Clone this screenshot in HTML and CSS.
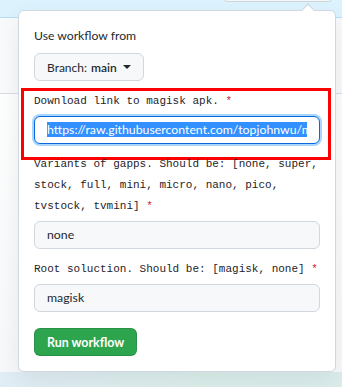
FILE: index.html
```html
<!DOCTYPE html>
<html>
<head>
<meta charset="utf-8">
<link rel="stylesheet" href="styles.css">
</head>
<body>
<div class="page">
  <div class="banner">
    <div class="banner-btn"></div>
  </div>
  <div class="row-head"></div>
  <div class="row-body"></div>
  <div class="footer"></div>

  <div class="popover">
    <div class="from-label">Use workflow from</div>
    <button class="branch-btn">Branch: <strong>main</strong> <span class="caret"></span></button>

    <div class="group group-first">
      <div class="label">Download link to magisk apk. <span class="req">*</span></div>
      <div class="input focused"><div class="clip"><span class="sel">https://raw.githubusercontent.com/topjohnwu/magisk-files/</span></div></div>
      <div class="annot"></div>
    </div>

    <div class="group">
      <div class="label">Variants of gapps. Should be: [none, super, stock, full, mini, micro, nano, pico, tvstock, tvmini] <span class="req">*</span></div>
      <div class="input">none</div>
    </div>

    <div class="group">
      <div class="label">Root soluction. Should be: [magisk, none] <span class="req">*</span></div>
      <div class="input">magisk</div>
    </div>

    <button class="run-btn">Run workflow</button>
  </div>
</div>
</body>
</html>
```

FILE: styles.css
```css
* { box-sizing: border-box; }
html, body { margin: 0; padding: 0; }
body {
  width: 342px;
  height: 387px;
  overflow: hidden;
  background: #ffffff;
  font-family: Lato, "Noto Sans", sans-serif;
  color: #24292f;
}
.page {
  position: relative;
  width: 342px;
  height: 387px;
  display: flex;
  flex-direction: column;
}
.banner {
  height: 18px;
  background: #ddf4ff;
  border-bottom: 1px solid #b6dcf5;
  display: flex;
  justify-content: flex-end;
  padding-right: 8px;
}
.banner-btn {
  width: 112px;
  height: 30px;
  margin-top: -28px;
  background: #f6f8fa;
  border: 1px solid #d0d7de;
  border-radius: 6px;
}
.row-head {
  height: 76px;
  background: #fafbfc;
  border-bottom: 1px solid #d8dee4;
}
.row-body {
  flex: 1;
  background: linear-gradient(180deg, #ffffff, #f8f9fa);
}
.footer {
  height: 15px;
  background: linear-gradient(90deg, #e2eef6, #dcefea 60%, #dbeeee);
}

.popover {
  position: absolute;
  left: 18px;
  top: 10px;
  width: 318px;
  height: 362px;
  background: #ffffff;
  border: 1px solid #d0d7de;
  border-radius: 6px;
  box-shadow: 0 8px 24px rgba(140, 149, 159, 0.2);
  padding: 15px;
  display: flex;
  flex-direction: column;
  align-items: flex-start;
}
.popover::before,
.popover::after {
  content: "";
  position: absolute;
  left: 282px;
  border: 7px solid transparent;
}
.popover::before {
  top: -15px;
  border-bottom: 8px solid #d0d7de;
}
.popover::after {
  top: -13px;
  border-bottom: 7px solid #ffffff;
}

.from-label {
  font-size: 12.2px;
  line-height: 20px;
}
.branch-btn {
  margin-top: 7px;
  height: 28px;
  padding: 0 12px;
  font-family: inherit;
  font-size: 12px;
  color: #24292f;
  background: #f6f8fa;
  border: 1px solid #d0d7de;
  border-radius: 6px;
  display: flex;
  align-items: center;
  gap: 4px;
}
.branch-btn strong { font-weight: 600; }
.caret {
  width: 0;
  height: 0;
  border-left: 4px solid transparent;
  border-right: 4px solid transparent;
  border-top: 4px solid #24292f;
  margin-left: 2px;
}

.group {
  position: relative;
  width: 100%;
  margin-top: 10px;
}
.label {
  font-family: "Liberation Mono", "DejaVu Sans Mono", monospace;
  font-size: 11px;
  line-height: 21px;
  color: #1f2328;
  margin-bottom: 4px;
}
.req { color: #cf222e; }
.input {
  height: 28px;
  padding: 0 12px;
  font-size: 12.3px;
  line-height: 26px;
  color: #24292f;
  background: #f6f8fa;
  border: 1px solid #d0d7de;
  border-radius: 6px;
  white-space: nowrap;
  overflow: hidden;
}
.input.focused {
  background: #ffffff;
  border-color: #0969da;
  box-shadow: 0 0 0 2px rgba(84, 174, 255, 0.5);
  line-height: 17px;
  padding: 4px 12px 0 12px;
}
.clip {
  overflow: hidden;
  white-space: nowrap;
}
.sel {
  background: #3390ff;
  color: #ffffff;
}
.annot {
  position: absolute;
  left: -13px;
  top: -3px;
  right: -11px;
  bottom: -16px;
  border: 3px solid #ff0000;
  pointer-events: none;
}

.run-btn {
  margin-top: 16px;
  height: 28px;
  padding: 0 12px;
  font-family: inherit;
  font-size: 12.4px;
  font-weight: 700;
  color: #ffffff;
  background: #2da44e;
  border: 1px solid rgba(27, 31, 36, 0.15);
  border-radius: 6px;
}
```
